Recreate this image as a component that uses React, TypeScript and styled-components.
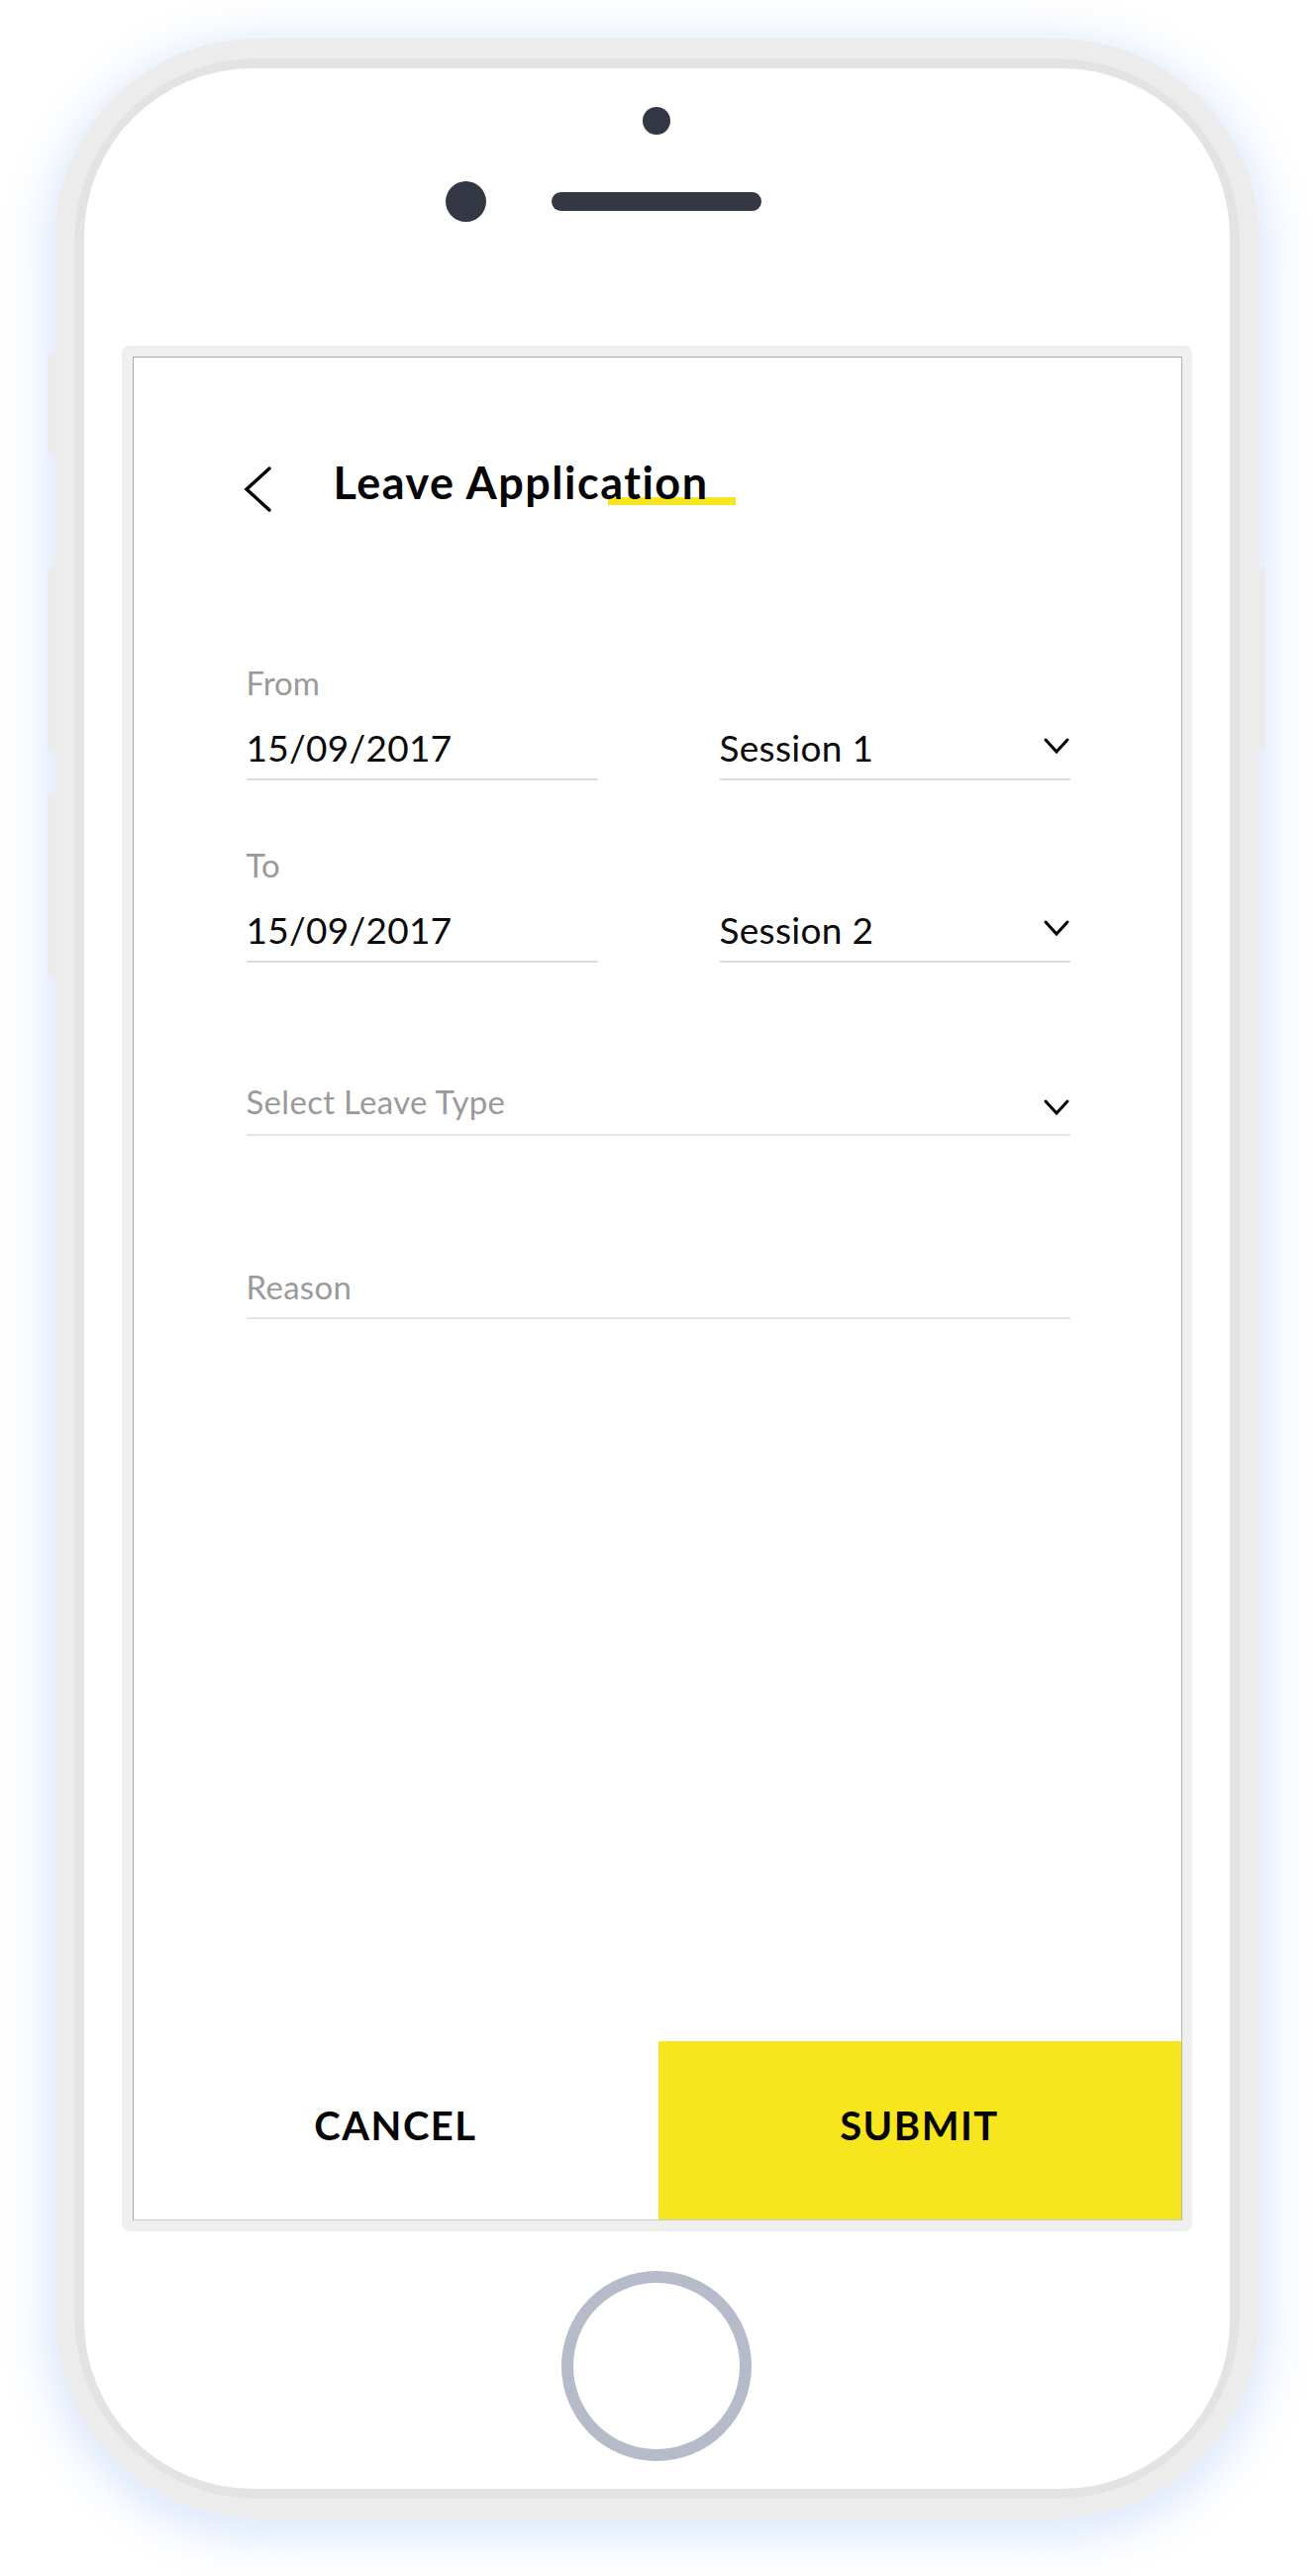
import React from "react";
import styled, { createGlobalStyle } from "styled-components";

const Global = createGlobalStyle`
  html, body { margin: 0; padding: 0; background: #ffffff; }
  body { font-family: Lato, "Open Sans", sans-serif; }
  * { box-sizing: border-box; }
`;

const Page = styled.div`
  display: flex;
  justify-content: center;
  padding: 39px 0 58px;
  background: #ffffff;
`;

const Body = styled.div`
  position: relative;
  width: 1217px;
  height: 2504px;
  padding: 20px;
  border-radius: 205px;
  background: #ececec;
  box-shadow: 0 10px 46px 10px rgba(216, 230, 252, 0.9);
`;

const SideButton = styled.div<{ $side: "left" | "right"; $top: number; $h: number }>`
  position: absolute;
  ${(p) => (p.$side === "left" ? "left: -7px;" : "right: -6px;")}
  top: ${(p) => p.$top}px;
  width: 7px;
  height: ${(p) => p.$h}px;
  border-radius: 3px;
  background: #ebebeb;
`;

const Band = styled.div`
  height: 100%;
  padding: 10px;
  border-radius: 185px;
  background: #e3e3e3;
`;

const Face = styled.div`
  height: 100%;
  border-radius: 170px;
  background: #ffffff;
  display: flex;
  flex-direction: column;
  align-items: center;
  padding-top: 39px;
`;

const CameraDot = styled.div`
  width: 28px;
  height: 28px;
  border-radius: 50%;
  background: #343744;
`;

const SensorRow = styled.div`
  width: 100%;
  margin-top: 47px;
  display: grid;
  grid-template-columns: 1fr auto 1fr;
  align-items: center;
`;

const FrontCamera = styled.div`
  justify-self: end;
  margin-right: 66px;
  width: 41px;
  height: 41px;
  border-radius: 50%;
  background: #343744;
`;

const Speaker = styled.div`
  width: 212px;
  height: 19px;
  border-radius: 10px;
  background: #343744;
`;

const ScreenFrame = styled.div`
  margin-top: 125px;
  width: 1081px;
  padding: 11px 10px 11px 11px;
  border-radius: 8px;
  background: #efefef;
`;

const Screen = styled.div`
  height: 1882px;
  border: 1px solid #a8a8a8;
  border-bottom-color: #c8c8c8;
  border-right-color: #b4b4b4;
  background: #ffffff;
  display: flex;
  flex-direction: column;
`;

const Header = styled.div`
  display: flex;
  align-items: flex-start;
  padding: 100px 0 0 110px;
`;

const BackIcon = styled.svg`
  display: block;
  margin-top: 9px;
  flex: none;
`;

const Title = styled.h1`
  position: relative;
  isolation: isolate;
  margin: 0 0 0 62px;
  font-family: Lato, sans-serif;
  font-weight: 700;
  font-size: 45px;
  line-height: 52px;
  color: #050505;
  letter-spacing: 1.5px;

  &::after {
    content: "";
    position: absolute;
    z-index: -1;
    right: -27px;
    top: 41px;
    width: 129px;
    height: 8px;
    background: #f7e51f;
  }
`;

const Form = styled.div`
  padding: 151px 112px 0 114px;
  display: flex;
  flex-direction: column;
`;

const DateGrid = styled.div<{ $gap: number }>`
  margin-top: ${(p) => p.$gap}px;
  display: grid;
  grid-template-columns: 355px 354px;
  justify-content: space-between;
  align-items: end;
`;

const FieldLabel = styled.div`
  font-family: Lato, sans-serif;
  font-weight: 400;
  font-size: 33px;
  line-height: 40px;
  color: #9a9a9a;
  margin-bottom: 24px;
`;

const ValueLine = styled.div`
  display: flex;
  align-items: center;
  justify-content: space-between;
  padding-bottom: 9px;
  border-bottom: 2px solid #dcdcdc;
`;

const Value = styled.span`
  font-family: Lato, sans-serif;
  font-weight: 400;
  font-size: 37px;
  line-height: 44px;
  letter-spacing: 0.3px;
  color: #0a0a0a;
`;

const WideLine = styled.div<{ $gap: number; $pb: number }>`
  margin-top: ${(p) => p.$gap}px;
  display: flex;
  align-items: center;
  justify-content: space-between;
  padding-bottom: ${(p) => p.$pb}px;
  border-bottom: 2px solid #e4e4e4;
`;

const Placeholder = styled.span`
  font-family: Lato, sans-serif;
  font-weight: 400;
  font-size: 33px;
  line-height: 40px;
  letter-spacing: 0.3px;
  color: #9a9a9a;
`;

const ChevronIcon = styled.svg<{ $shift: number }>`
  display: block;
  flex: none;
  margin-top: ${(p) => p.$shift}px;
`;

const ButtonRow = styled.div`
  margin-top: auto;
  height: 180px;
  display: grid;
  grid-template-columns: 530px 1fr;
`;

const ActionButton = styled.button<{ $primary?: boolean }>`
  border: none;
  margin: 0;
  padding: 0 0 10px;
  background: ${(p) => (p.$primary ? "#f7e61e" : "#ffffff")};
  font-family: Lato, sans-serif;
  font-weight: 700;
  font-size: 40px;
  line-height: 48px;
  letter-spacing: 1.5px;
  color: #050505;
  display: flex;
  align-items: center;
  justify-content: center;
  cursor: pointer;
`;

const HomeButton = styled.div`
  margin-top: 40px;
  width: 192px;
  height: 192px;
  border-radius: 50%;
  border: 12px solid #b5bbc9;
`;

const Chevron = ({ shift }: { shift: number }) => (
  <ChevronIcon $shift={shift} width="28" height="18" viewBox="0 0 28 18">
    <path d="M3 3 L14 15 L25 3" fill="none" stroke="#000" strokeWidth="3" strokeLinecap="round" strokeLinejoin="miter" />
  </ChevronIcon>
);

const DateRow = ({ label, date, session, gap }: { label: string; date: string; session: string; gap: number }) => (
  <DateGrid $gap={gap}>
    <div>
      <FieldLabel>{label}</FieldLabel>
      <ValueLine>
        <Value>{date}</Value>
      </ValueLine>
    </div>
    <ValueLine>
      <Value>{session}</Value>
      <Chevron shift={-4} />
    </ValueLine>
  </DateGrid>
);

export default function App() {
  return (
    <>
      <Global />
      <Page>
        <Body>
          <SideButton $side="left" $top={319} $h={100} />
          <SideButton $side="left" $top={534} $h={184} />
          <SideButton $side="left" $top={762} $h={185} />
          <SideButton $side="right" $top={534} $h={184} />
          <Band>
            <Face>
              <CameraDot />
              <SensorRow>
                <FrontCamera />
                <Speaker />
                <div />
              </SensorRow>
              <ScreenFrame>
                <Screen>
                  <Header>
                    <BackIcon width="30" height="48" viewBox="0 0 30 48">
                      <path d="M27 3 L4 24 L27 45" fill="none" stroke="#000" strokeWidth="3.4" strokeLinecap="round" strokeLinejoin="miter" />
                    </BackIcon>
                    <Title>Leave Application</Title>
                  </Header>
                  <Form>
                    <DateRow label="From" date="15/09/2017" session="Session 1" gap={0} />
                    <DateRow label="To" date="15/09/2017" session="Session 2" gap={65} />
                    <WideLine $gap={120} $pb={13}>
                      <Placeholder>Select Leave Type</Placeholder>
                      <Chevron shift={12} />
                    </WideLine>
                    <WideLine $gap={132} $pb={11}>
                      <Placeholder>Reason</Placeholder>
                    </WideLine>
                  </Form>
                  <ButtonRow>
                    <ActionButton>CANCEL</ActionButton>
                    <ActionButton $primary>SUBMIT</ActionButton>
                  </ButtonRow>
                </Screen>
              </ScreenFrame>
              <HomeButton />
            </Face>
          </Band>
        </Body>
      </Page>
    </>
  );
}
